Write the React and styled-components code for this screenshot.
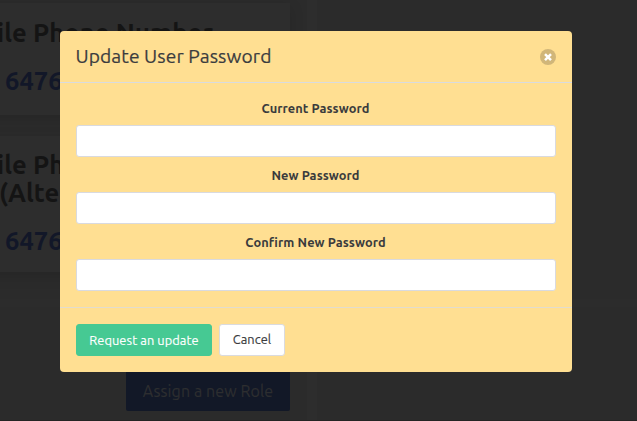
import React from 'react';
import styled, { createGlobalStyle } from 'styled-components';

const GlobalStyle = createGlobalStyle`
  *, *::before, *::after { box-sizing: border-box; }
  body {
    margin: 0;
    overflow: hidden;
    background: #2b2b2b;
    color: #3b4351;
    font-family: Ubuntu, "Noto Sans", sans-serif;
  }
`;

const Page = styled.div`
  display: grid;
  grid-template-columns: 307px 10px 1fr;
  height: 421px;
  overflow: hidden;
  border-bottom: 1px solid #242424;
`;

const Profile = styled.main`
  display: flex;
  flex-direction: column;
  align-items: flex-end;
  background: #2b2b2b;
`;

const Phones = styled.section`
  display: flex;
  flex-direction: column;
  align-items: flex-end;
  gap: 21px;
  width: 307px;
  height: 307px;
  padding: 3px 17px 0 0;
  border-bottom: 8px solid #2c2c2c;
`;

const Card = styled.section`
  width: 320px;
  height: ${({ $height }) => $height}px;
  padding-top: ${({ $top }) => $top}px;
  background: #2d2d2d;
  box-shadow: 0 4px 14px rgba(0, 0, 0, 0.12);
  flex: none;
`;

const CardTitle = styled.h2`
  margin: 0;
  padding-left: ${({ $indent }) => $indent}px;
  color: #141414;
  font-size: 25.6px;
  font-weight: 700;
  line-height: 28px;
  letter-spacing: 0.08px;
  white-space: nowrap;
`;

const PhoneNumber = styled.p`
  margin: 20px 0 0 35px;
  color: #121728;
  font-size: 25.6px;
  font-weight: 700;
  line-height: 28px;
`;

const RoleButton = styled.button`
  width: 164px;
  height: 44px;
  margin: 60px 17px 0 0;
  padding: 4px 0 0;
  border: 0;
  border-radius: 2px;
  background: #121827;
  color: #2d2e30;
  font: 400 16px/24px Ubuntu, "Noto Sans", sans-serif;
  letter-spacing: 0.1px;
  white-space: nowrap;
  -webkit-text-stroke: 0.15px currentColor;
`;

const Gutter = styled.div`
  background: #2d2d2d;
`;

const Aside = styled.aside`
  background: #2b2b2b;
`;

const AsidePanel = styled.div`
  height: 307px;
  border-bottom: 8px solid #2c2c2c;
`;

const Overlay = styled.div`
  position: fixed;
  inset: 0;
  display: flex;
  justify-content: center;
  align-items: flex-start;
  padding: 31px 5px 0 0;
`;

const Dialog = styled.form`
  width: 512px;
  height: 341px;
  border-radius: 4px;
  background: #ffdf92;
`;

const Header = styled.header`
  display: flex;
  justify-content: space-between;
  align-items: center;
  height: 52px;
  padding: 0 16px;
  border-bottom: 1px solid #d9dbdf;
`;

const Title = styled.h1`
  margin: -2px 0 0 -0.5px;
  color: #3b3c3f;
  font-size: 19.2px;
  font-weight: 400;
  line-height: 24px;
  letter-spacing: 0.1px;
  -webkit-text-stroke: 0.2px currentColor;
`;

const CloseButton = styled.button`
  display: flex;
  width: 16px;
  height: 16px;
  padding: 0;
  border: 0;
  border-radius: 50%;
  background: #d1b679;
`;

const Fields = styled.div`
  height: 224px;
  padding: 16px 16px 0;
`;

const Field = styled.label`
  display: flex;
  flex-direction: column;
  height: 67px;
`;

const FieldName = styled.span`
  height: 26px;
  padding-right: 1px;
  color: #3a3b3d;
  font-size: 12.8px;
  font-weight: 700;
  line-height: 18px;
  letter-spacing: 0.07px;
  text-align: center;
`;

const Input = styled.input`
  width: 100%;
  height: 32px;
  padding: 4px 10px;
  border: 1px solid #d9dadf;
  border-radius: 3px;
  background: #fff;
  outline: 0;
`;

const Footer = styled.footer`
  display: flex;
  gap: 7px;
  padding: 16px;
  border-top: 1px solid #e2dccd;
`;

const Button = styled.button`
  width: ${({ $primary }) => ($primary ? 136 : 66)}px;
  height: 32px;
  padding: ${({ $primary }) => ($primary ? '0' : '0 0 2px')};
  border: 1px solid ${({ $primary }) => ($primary ? '#46c993' : '#dadbdf')};
  border-radius: 3px;
  background: ${({ $primary }) => ($primary ? '#46c993' : '#fff')};
  color: ${({ $primary }) => ($primary ? '#fff' : '#3a3b3d')};
  font: 400 12.8px/20px Ubuntu, "Noto Sans", sans-serif;
  letter-spacing: 0.08px;
  white-space: nowrap;
  -webkit-text-stroke: 0.15px currentColor;
`;

const fields = ['Current Password', 'New Password', 'Confirm New Password'];

export default function App() {
  return (
    <>
      <GlobalStyle />
      <Page>
        <Profile>
          <Phones>
            <Card $height={112} $top={16}>
              <CardTitle $indent={27}>ile Phone Number</CardTitle>
              <PhoneNumber>6476</PhoneNumber>
            </Card>
            <Card $height={136} $top={15}>
              <CardTitle $indent={27}>ile Phone Number</CardTitle>
              <CardTitle $indent={29}>(Alternate)</CardTitle>
              <PhoneNumber>6476</PhoneNumber>
            </Card>
          </Phones>
          <RoleButton>Assign a new Role</RoleButton>
        </Profile>
        <Gutter />
        <Aside>
          <AsidePanel />
        </Aside>
      </Page>
      <Overlay>
        <Dialog role="dialog" aria-label="Update User Password">
          <Header>
            <Title>Update User Password</Title>
            <CloseButton type="button" aria-label="Close">
              <svg width="16" height="16" viewBox="0 0 16 16">
                <path d="M5 5.2l6 6M11 5.2l-6 6" stroke="#fff" strokeWidth="2.5" />
              </svg>
            </CloseButton>
          </Header>
          <Fields>
            {fields.map((name) => (
              <Field key={name}>
                <FieldName>{name}</FieldName>
                <Input type="password" />
              </Field>
            ))}
          </Fields>
          <Footer>
            <Button type="button" $primary>Request an update</Button>
            <Button type="button">Cancel</Button>
          </Footer>
        </Dialog>
      </Overlay>
    </>
  );
}
